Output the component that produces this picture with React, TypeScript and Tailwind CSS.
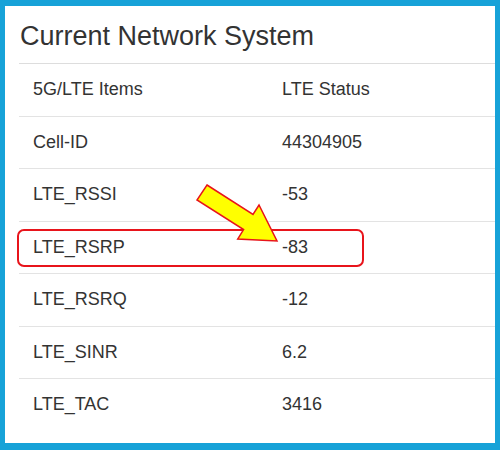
import React from 'react';

const rows = [
  { name: '5G/LTE Items', value: 'LTE Status' },
  { name: 'Cell-ID', value: '44304905' },
  { name: 'LTE_RSSI', value: '-53' },
  { name: 'LTE_RSRP', value: '-83' },
  { name: 'LTE_RSRQ', value: '-12' },
  { name: 'LTE_SINR', value: '6.2' },
  { name: 'LTE_TAC', value: '3416' },
];

const App = () => {
  return (
    <div className="relative w-[500px] h-[450px] bg-[#17a2d8] pt-[6px] pl-[5px] pr-[5px] pb-[7px] font-['Liberation_Sans',Arial,sans-serif] text-[#333]">
      <div className="h-full bg-white">
        {/* Title */}
        <div className="h-[57px] pl-[15px] flex items-center">
          <h1 className="text-[27px] leading-none pt-[3px]">Current Network System</h1>
        </div>

        {/* Table */}
        <div className="ml-[14px]">
          {rows.map((row, i) => (
            <div
              key={row.name}
              className={`grid grid-cols-[249px_1fr] h-[52.5px] items-center text-[18px] ${i === 0 ? 'border-t border-[#dddddd]' : 'border-t border-[#e3e3e3]'}`}
            >
              <div className="pl-[14px]">{row.name}</div>
              <div className="pl-[14px]">{row.value}</div>
            </div>
          ))}
        </div>
      </div>

      {/* Highlight box */}
      <div className="absolute left-[17px] top-[229px] w-[347px] h-[38px] rounded-[7px] border-2 border-[#e8141b]" />

      {/* Arrow */}
      <svg className="absolute left-0 top-0" width="500" height="450" viewBox="0 0 500 450">
        <polygon
          points="207,185 253,214.4 259,205 277,241 237.7,239 243.6,229.6 197,200"
          fill="#ffff00"
          stroke="#e8141b"
          strokeWidth="1.5"
          strokeLinejoin="miter"
        />
      </svg>
    </div>
  );
};

export default App;
